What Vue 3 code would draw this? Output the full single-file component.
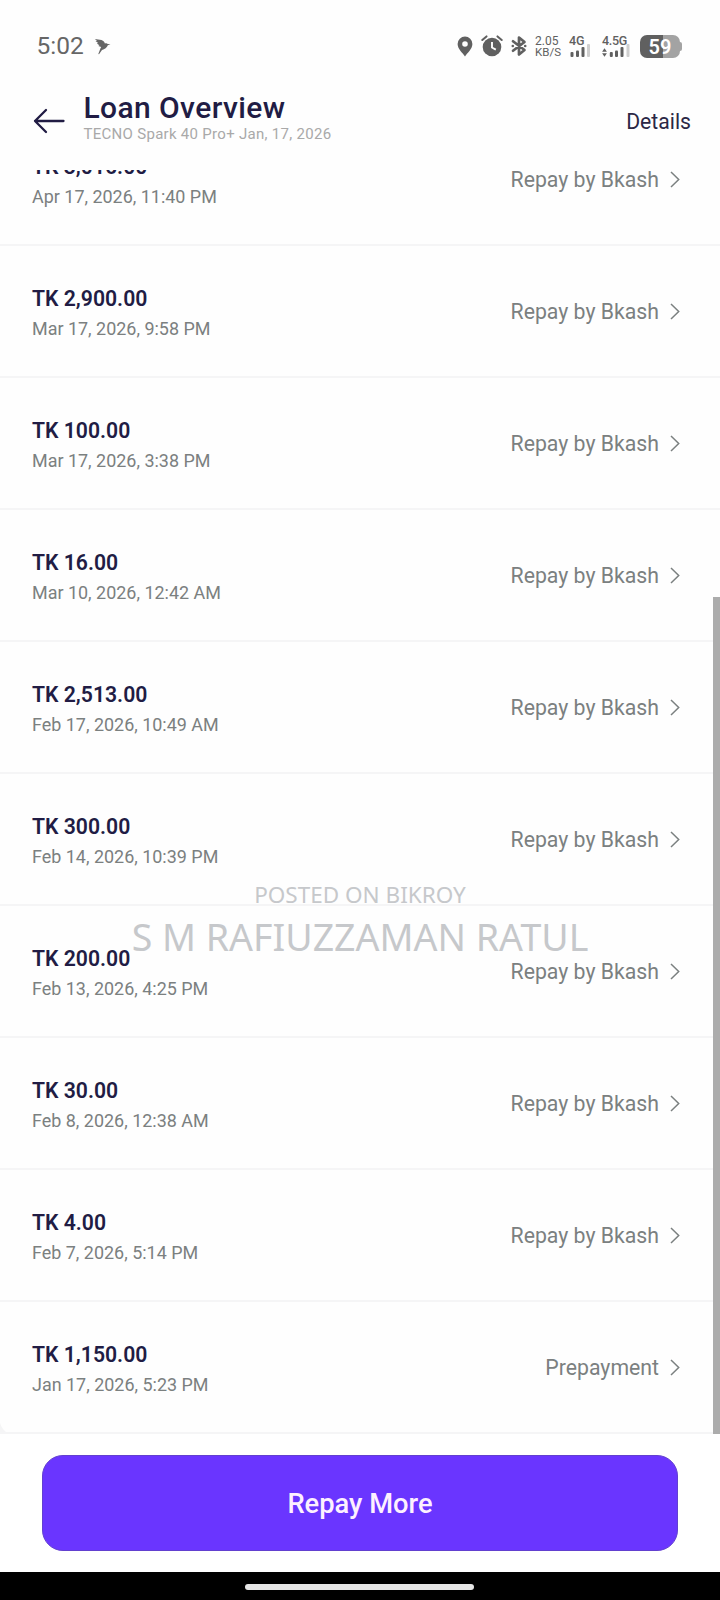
<script setup>
const payments = [
  { amount: 'TK 3,016.00', date: 'Apr 17, 2026, 11:40 PM', kind: 'Repay by Bkash' },
  { amount: 'TK 2,900.00', date: 'Mar 17, 2026, 9:58 PM', kind: 'Repay by Bkash' },
  { amount: 'TK 100.00', date: 'Mar 17, 2026, 3:38 PM', kind: 'Repay by Bkash' },
  { amount: 'TK 16.00', date: 'Mar 10, 2026, 12:42 AM', kind: 'Repay by Bkash' },
  { amount: 'TK 2,513.00', date: 'Feb 17, 2026, 10:49 AM', kind: 'Repay by Bkash' },
  { amount: 'TK 300.00', date: 'Feb 14, 2026, 10:39 PM', kind: 'Repay by Bkash' },
  { amount: 'TK 200.00', date: 'Feb 13, 2026, 4:25 PM', kind: 'Repay by Bkash' },
  { amount: 'TK 30.00', date: 'Feb 8, 2026, 12:38 AM', kind: 'Repay by Bkash' },
  { amount: 'TK 4.00', date: 'Feb 7, 2026, 5:14 PM', kind: 'Repay by Bkash' },
  { amount: 'TK 1,150.00', date: 'Jan 17, 2026, 5:23 PM', kind: 'Prepayment' },
]
</script>

<template>
  <div class="screen">
    <div class="status">
      <span class="time">5:02</span>
      <svg class="bird" width="17" height="17" viewBox="0 0 17 17">
        <path d="M.8 1L7.500 1.900C9.600 2.600 10.600 4 10.900 5.600C11.800 5 13 5 13.700 5.900L16.500 6.300L13.800 7.300C13.200 9.600 10.600 11.300 8 12L5 16.300L4.300 15.900L6.500 10.300L7.200 9L4.300 8L5.400 7.200L2.800 5.600L4.200 5L1.500 3L3 2.800Z" fill="#666" />
      </svg>
      <div class="tray">
        <svg class="pin" width="16" height="21" viewBox="0 0 16 21">
          <path fill="#606060" fill-rule="evenodd" d="M8 .5A7.400 7.400 0 0 0 .6 7.900C.6 13 6 17 8 20.500C10 17 15.400 13 15.400 7.900A7.400 7.400 0 0 0 8 .5ZM8 5.200A2.800 2.800 0 1 1 8 10.800A2.800 2.800 0 0 1 8 5.200Z" />
        </svg>
        <svg class="alarm" width="22" height="22" viewBox="0 0 22 22">
          <circle cx="11" cy="12" r="9.300" fill="#606060" />
          <path d="M1.300 5L5.500 1.400M20.700 5L16.500 1.400" stroke="#606060" stroke-width="2" stroke-linecap="round" />
          <path d="M11 7V12.500L14.800 14.600" fill="none" stroke="#fff" stroke-width="1.900" />
        </svg>
        <svg class="bt" width="16" height="22" viewBox="0 0 16 22">
          <path d="M2 6.200L13.500 15L8 19.500V2.500L13.500 7L2 15.800" fill="none" stroke="#606060" stroke-width="2.700" stroke-linejoin="round" stroke-linecap="round" />
          <circle cx="1.800" cy="11" r="1.300" fill="#606060" /><circle cx="14.200" cy="11" r="1.300" fill="#606060" />
        </svg>
        <div class="speed"><span class="rate">2.05</span><span>KB/S</span></div>
        <div class="signal">
          <span>4G</span>
          <svg width="22" height="13" viewBox="0 0 22 13">
            <g fill="#606060"><rect x="1.500" y="8" width="3" height="5" rx="1" /><rect x="7" y="6.500" width="3" height="6.500" rx="1" /><rect x="12.500" y="3" width="3" height="10" rx="1" /></g>
            <rect x="18" y="0" width="3" height="13" rx="1" fill="#cfcfcf" />
          </svg>
        </div>
        <div class="signal wide">
          <span>4.5G</span>
          <svg width="28" height="13" viewBox="0 0 28 13">
            <path d="M2.500 9.200L4.900 9.200L2.500 12.700L.1 9.200ZM2.500 4.200L4.900 7.700H.1Z" fill="#606060" />
            <g fill="#606060"><rect x="7.800" y="8" width="3" height="5" rx="1" /><rect x="13" y="6.500" width="3" height="6.500" rx="1" /><rect x="18.500" y="3" width="3" height="10" rx="1" /></g>
            <rect x="24.500" y="0" width="3" height="13" rx="1" fill="#cfcfcf" />
          </svg>
        </div>
        <div class="battery"><span>59</span></div>
        <i class="nub"></i>
      </div>
    </div>

    <header class="header">
      <svg class="back" width="32" height="26" viewBox="0 0 32 26">
        <path d="M13 2L2 13L13 24M2 13H30.500" fill="none" stroke="#211c44" stroke-width="2.300" stroke-linecap="round" stroke-linejoin="round" />
      </svg>
      <div class="heading">
        <h1>Loan Overview</h1>
        <p>TECNO Spark 40 Pro+ Jan, 17, 2026</p>
      </div>
      <a class="details">Details</a>
    </header>

    <main class="list">
      <div v-for="p in payments" :key="p.date" class="row">
        <div class="info">
          <span class="amount">{{ p.amount }}</span>
          <span class="date">{{ p.date }}</span>
        </div>
        <div class="kind">
          <span>{{ p.kind }}</span>
          <svg width="10" height="17" viewBox="0 0 10 17">
            <path d="M1 1L8.700 8.500L1 16" fill="none" stroke="#7b8080" stroke-width="1.500" />
          </svg>
        </div>
      </div>
      <svg class="corner" width="9" height="11" viewBox="0 0 9 11">
        <path d="M0 0C1.500 5 4.500 8.500 9 11H0Z" fill="#f5f5f6" />
      </svg>
      <div class="scrollbar"></div>
    </main>

    <footer class="footer"><button class="repay">Repay More</button></footer>
    <div class="nav"><i></i></div>

    <div class="watermark">
      <span class="posted">POSTED ON BIKROY</span>
      <span class="name">S M RAFIUZZAMAN RATUL</span>
    </div>
  </div>
</template>

<style>
body { margin: 0; background: #fff; }
</style>

<style scoped>
.screen {
  position: relative;
  display: flex;
  flex-direction: column;
  width: 720px;
  height: 1600px;
  overflow: hidden;
  background: #fefefe;
  font-family: Roboto, "Noto Sans", sans-serif;
  white-space: nowrap;
}
.status {
  display: flex;
  align-items: center;
  height: 72px;
  padding: 20px 38px 0 36.500px;
  box-sizing: border-box;
  color: #666;
}
.time { font-size: 24.500px; line-height: 30px; }
.bird { margin-left: 10px; }
.tray { display: flex; align-items: center; margin-left: auto; height: 24px; color: #606060; }
.alarm { margin-left: 8px; }
.bt { margin-left: 8px; }
.speed { display: flex; flex-direction: column; margin: 1px 0 0 8px; width: 25px; font-size: 11.500px; line-height: 11px; }
.rate { font-size: 12px; }
.signal { display: flex; flex-direction: column; width: 22px; height: 21px; margin-left: 9px; position: relative; font-size: 12.500px; line-height: 9px; font-weight: 500; }
.signal svg { position: absolute; bottom: 0; left: 0; }
.wide { width: 28px; margin-left: 11px; letter-spacing: -0.300px; }
.battery {
  display: flex;
  justify-content: center;
  width: 40px;
  height: 23px;
  margin-left: 10px;
  border-radius: 7px;
  background: linear-gradient(90deg, #606060 57%, #a3a3a3 57%);
  color: #fff;
  font-size: 20px;
  line-height: 24px;
  font-weight: 600;
}
.nub { width: 2px; height: 9px; border-radius: 0 2px 2px 0; background: #a3a3a3; }
.header { display: flex; height: 98px; padding: 0 29px 0 32.500px; box-sizing: border-box; }
.back { margin-top: 36px; }
.heading { margin-left: 19px; padding-top: 18px; }
h1 { margin: 0; font-size: 30px; line-height: 35px; font-weight: 500; letter-spacing: 0.400px; color: #211c44; }
.heading p { margin: 0; font-size: 15px; line-height: 18px; letter-spacing: 0.290px; color: #a9a9a9; }
.details { margin: 36px 0 0 auto; font-size: 21.200px; line-height: 28px; color: #2b2745; }
.list {
  position: relative;
  display: flex;
  flex-direction: column;
  justify-content: flex-end;
  height: 1264px;
  overflow: hidden;
}
.row {
  display: flex;
  flex: none;
  justify-content: space-between;
  height: 132px;
  padding: 0 40.500px 0 32px;
  box-sizing: border-box;
  border-bottom: 2px solid #f5f5f6;
}
.info { display: flex; flex-direction: column; gap: 3px; padding-top: 39px; }
.amount { font-size: 21.200px; line-height: 28px; font-weight: 600; color: #211c44; }
.date { font-size: 17.950px; line-height: 26px; color: #7b8080; }
.kind { display: flex; align-items: center; gap: 10.500px; font-size: 21.250px; color: #7b8080; }
.corner { position: absolute; left: 0; bottom: 0; }
.scrollbar { position: absolute; right: 0; top: 427px; bottom: 0; width: 7px; background: #acacac; }
.footer { height: 138px; padding: 21px 42px 0; box-sizing: border-box; background: #fff; }
.repay {
  display: block;
  width: 636px;
  height: 96px;
  padding: 1px 0 0;
  box-sizing: border-box;
  border: 1px solid #6240cf;
  border-radius: 21px;
  background: #6a35ff;
  color: #fdf0ff;
  font: 500 27.300px/94px Roboto, sans-serif;
}
.nav { display: flex; justify-content: center; height: 28px; padding: 12px 1px 0 0; box-sizing: border-box; background: #000; }
.nav i { width: 229px; height: 6px; border-radius: 3px; background: #e6e6e6; }
.watermark {
  position: absolute;
  top: 879px;
  left: 0;
  width: 720px;
  display: flex;
  flex-direction: column;
  align-items: center;
  font-family: "Noto Sans", sans-serif;
  color: #c6c8cb;
}
.posted { font-size: 22.500px; line-height: 32px; }
.name { font-size: 37.500px; line-height: 52px; }
</style>
